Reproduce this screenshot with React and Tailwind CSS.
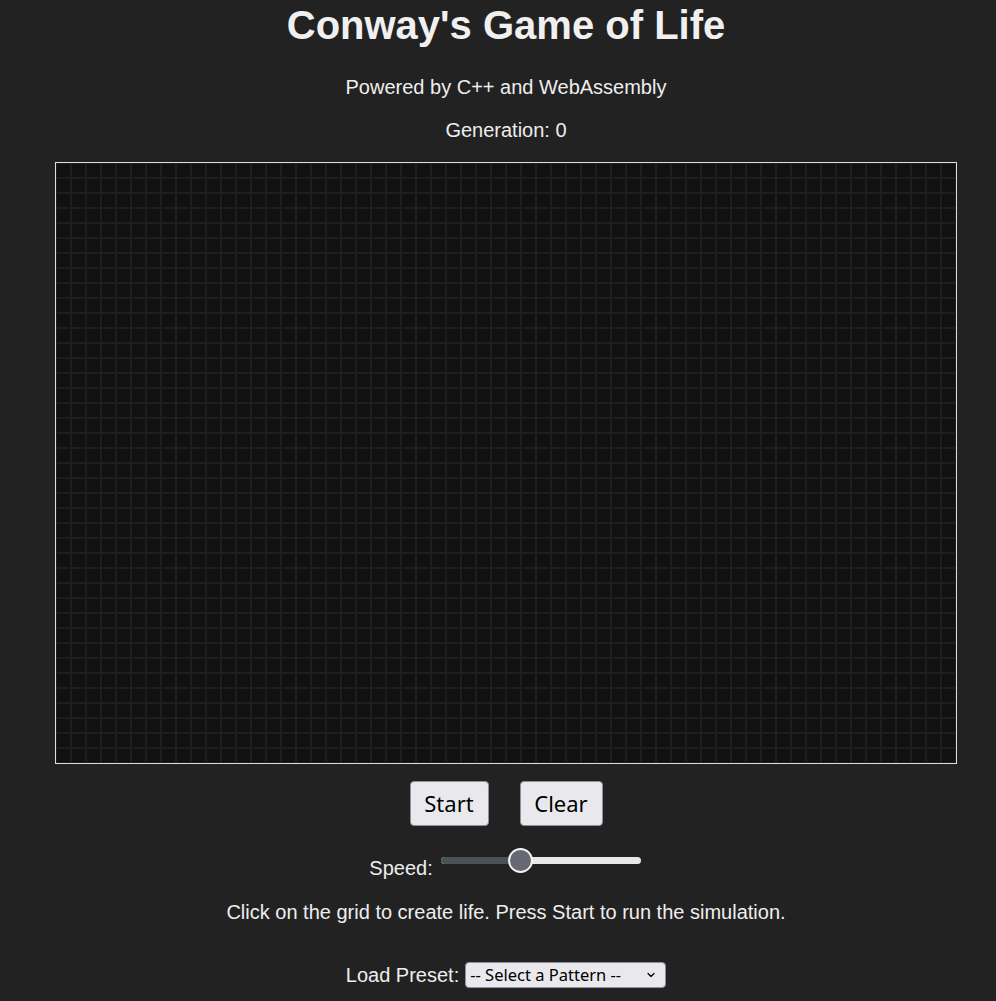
import { ChevronDown } from "lucide-react";

const COLS = 60;
const ROWS = 40;
const CELL = 15;

function Grid() {
  const w = COLS * CELL;
  const h = ROWS * CELL;
  const lines = [];
  for (let i = 0; i <= COLS; i++) {
    lines.push(<line key={"v" + i} x1={i * CELL} y1={0} x2={i * CELL} y2={h} />);
  }
  for (let j = 0; j <= ROWS; j++) {
    lines.push(<line key={"h" + j} x1={0} y1={j * CELL} x2={w} y2={j * CELL} />);
  }
  return (
    <svg width={w} height={h} className="block">
      <rect width={w} height={h} fill="#111111" />
      <g stroke="#1e1e1e" strokeWidth="2">{lines}</g>
    </svg>
  );
}

function Slider() {
  return (
    <div className="relative w-[200px] h-[24px]">
      <div className="absolute left-0 right-0 top-[9px] h-[7px] rounded-full bg-[#e8e8eb]" />
      <div className="absolute left-0 w-[80px] top-[9px] h-[7px] rounded-l-full bg-[#4a5458]" />
      <div className="absolute left-[67px] top-0 w-[25px] h-[25px] rounded-full bg-[#676a75] border-2 border-[#f2f2f2]" />
    </div>
  );
}

export default function App() {
  return (
    <div className="min-h-screen bg-[#222222] text-[#eeeeee] font-['Liberation_Sans',Arial,sans-serif] pl-4">
      <div className="flex flex-col items-center">
        <h1 className="mt-[2px] text-[40px] leading-[46px] font-bold text-[#f0f0f0]">Conway's Game of Life</h1>
        <p className="mt-[28px] text-[20px] leading-[23px]">Powered by C++ and WebAssembly</p>
        <p className="mt-[20px] text-[20px] leading-[23px]">Generation: 0</p>

        <div className="mt-[20px] border border-[#dddddd]">
          <Grid />
        </div>

        <div className="mt-[17px] flex gap-[31px] font-['Noto_Sans',sans-serif] text-[22px] text-black">
          <button className="w-[79px] h-[45px] bg-[#e9e9ed] border border-[#8f8f9d] rounded-[4px]">Start</button>
          <button className="w-[83px] h-[45px] bg-[#e9e9ed] border border-[#8f8f9d] rounded-[4px]">Clear</button>
        </div>

        <div className="mt-[22px] flex items-start gap-[8px] mr-[2px]">
          <span className="mt-[9px] text-[20px] leading-[23px]">Speed:</span>
          <Slider />
        </div>

        <p className="mt-[21px] text-[20px] leading-[23px]">
          Click on the grid to create life. Press Start to run the simulation.
        </p>

        <div className="mt-[40px] flex items-start gap-[6px]">
          <span className="text-[20px] leading-[23px]">Load Preset:</span>
          <div className="relative -mt-[2px]">
            <select className="appearance-none w-[201px] h-[26px] pl-[4px] bg-[#e9e9ed] border border-[#8f8f9d] rounded-[4px] text-black text-[16.5px] font-['Noto_Sans',sans-serif] leading-none">
              <option>-- Select a Pattern --</option>
            </select>
            <ChevronDown className="absolute right-[9px] top-[7px] w-[12px] h-[12px] text-black pointer-events-none" strokeWidth={2.5} />
          </div>
        </div>
      </div>
    </div>
  );
}
